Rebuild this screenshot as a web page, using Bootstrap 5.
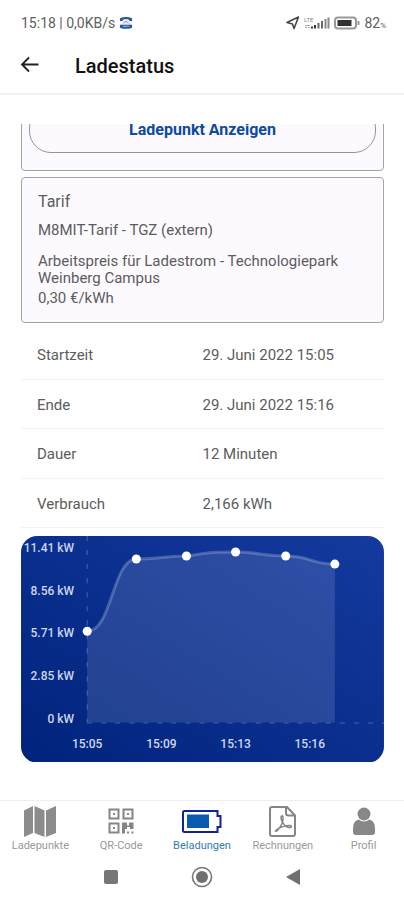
<!DOCTYPE html>
<html lang="de">
<head>
<meta charset="utf-8">
<meta name="viewport" content="width=device-width, initial-scale=1">
<title>Ladestatus</title>
<link href="https://cdn.jsdelivr.net/npm/bootstrap@5.3.0/dist/css/bootstrap.min.css" rel="stylesheet">
<style>
  body { font-family: Roboto, "Liberation Sans", sans-serif; font-size: 15px; line-height: 17px; color: #5c5c5c; background: #fff; }
  svg { display: block; }
  .statusbar { height: 46px; padding: 0 18px 0 21px; font-size: 14px; color: #606060; }
  .percent { font-size: 8px; line-height: 12px; }
  .appbar { height: 49px; border-bottom: 2px solid #f1f1f1; color: #111; }
  .appbar h1 { font-size: 20px; line-height: 24px; font-weight: 500; }
  .content { margin: 29px 20px 0 21px; }
  .scroll-edge { height: 47px; }
  .panel { border: 1px solid #a3a2a4; border-radius: 4px; background: #fcfafe; }
  .locate { padding: 17px 7px; }
  .show-btn { height: 47px; border: 1px solid #959496; border-radius: 22px; color: #0d4b9b; font-size: 16px; font-weight: 700; }
  .tariff { margin-top: 6px; padding: 14px 14px 15px 16px; }
  .tariff h2 { font-size: 16px; line-height: 20px; font-weight: 400; margin-bottom: 10px; color: #5c5c5c; }
  .tariff p { margin-bottom: 14px; }
  .tariff .terms { margin-bottom: 3px; }
  .facts { margin-top: 6px; }
  .facts th, .facts td { height: 50px; padding: 3px 0 0; font-weight: 400; vertical-align: middle; border-bottom: 1px solid #f3f3f3; }
  .facts th { padding-left: 16px; }
  .facts tr:nth-child(even) > * { height: 49px; }
  .chart { margin-top: 8px; }
  .chart text { font-size: 12px; font-weight: 500; fill: #ccd6ef; }
  .tabs { border-top: 1px solid #eee; font-size: 11px; line-height: 14px; }
  .tabs a { color: #999; text-decoration: none; }
  .tabs a.active { color: #2f7db2; }
  .sysnav { height: 47px; padding: 0 65px; }
</style>
</head>
<body class="d-flex flex-column min-vh-100">
<div class="statusbar d-flex align-items-center justify-content-between">
  <div class="d-flex align-items-center">
    <span>15:18 | 0,0KB/s</span>
    <svg class="ms-1" width="14" height="14" viewBox="0 0 15 14" aria-hidden="true"><path d="M1 5V2Q7.500-1 14 2v3l-3-.5-1-1.500H5L4 4.500z" fill="#2458a7"/><path d="M4.500 4h6l2.500 5H2z" fill="#e8e5f4"/><path d="m5 7 2.500-2L10 7" stroke="#d77b8b" fill="none"/><path d="M1 9h13v3q-6.500 2.500-13 0z" fill="#2458a7"/><path d="M4 10.500h7" stroke="#a9bce0"/></svg>
  </div>
  <div class="d-flex align-items-center gap-1">
    <svg width="14" height="14" viewBox="0 0 14 14" aria-hidden="true"><path d="M1 6.500 12.500 1 8 12.500 6.500 8z" fill="none" stroke="#444" stroke-width="1.600" stroke-linejoin="round"/></svg>
    <svg width="26" height="14" viewBox="0 0 26 14" aria-hidden="true"><text x="0" y="6" font-size="6" fill="#888">LTE</text><path d="M1 9.500h5M1 11.500h2m1 0h2" stroke="#aaa"/><path d="M8 10.500v2M11 9v3.500" stroke="#333" stroke-width="2"/><path d="M14.500 7v5.500M18 5v7.500" stroke="#666" stroke-width="2"/><path d="M21.500 3v9.500M24.500 1.500v11" stroke="#888" stroke-width="2"/></svg>
    <svg width="26" height="14" viewBox="0 0 26 14" aria-hidden="true"><rect x="1" y="1.500" width="21" height="11" rx="3" fill="none" stroke="#999" stroke-width="2"/><rect x="3.500" y="4" width="14" height="6" fill="#333"/><path d="M24.500 5v4" stroke="#999" stroke-width="2"/></svg>
    <span class="d-flex align-items-end">82<span class="percent">%</span></span>
  </div>
</div>
<header class="appbar d-flex align-items-center pb-2">
  <button type="button" class="btn border-0 p-0 ms-3" aria-label="Zurück"><svg width="27" height="24" viewBox="0 0 27 24" fill="none" stroke="#222" stroke-width="1.800"><path d="M22.500 10.500H6.500M13 3.500 6 10.500l7 7"/></svg></button>
  <h1 class="mb-0 ms-4 ps-2">Ladestatus</h1>
</header>
<main class="content">
  <div class="scroll-edge overflow-hidden d-flex flex-column justify-content-end">
    <div class="panel locate"><button type="button" class="show-btn btn w-100 p-0">Ladepunkt Anzeigen</button></div>
  </div>
  <section class="panel tariff">
    <h2>Tarif</h2>
    <p>M8MIT-Tarif - TGZ (extern)</p>
    <p class="terms">Arbeitspreis für Ladestrom - Technologiepark Weinberg Campus</p>
    <p class="mb-0">0,30 €/kWh</p>
  </section>
  <table class="facts w-100">
    <colgroup><col class="w-50"><col class="w-50"></colgroup>
    <tbody>
    <tr><th scope="row">Startzeit</th><td>29. Juni 2022 15:05</td></tr>
    <tr><th scope="row">Ende</th><td>29. Juni 2022 15:16</td></tr>
    <tr><th scope="row">Dauer</th><td>12 Minuten</td></tr>
    <tr><th scope="row">Verbrauch</th><td>2,166 kWh</td></tr>
    </tbody>
  </table>
  <svg class="chart w-100" viewBox="0 0 362 226" role="img" aria-label="Ladeleistung in kW">
    <defs>
      <linearGradient id="bg" x1="0" y1="1" x2="1" y2="0"><stop stop-color="#00237c"/><stop offset="1" stop-color="#143a9f"/></linearGradient>
      <clipPath id="round"><rect width="362" height="226" rx="16"/></clipPath>
    </defs>
    <g clip-path="url(#round)">
      <rect width="362" height="226" fill="url(#bg)"/>
      <path d="M66 0V186M66 186.500H362" fill="none" stroke="#fff" stroke-opacity=".25" stroke-dasharray="5 9"/>
      <path d="M66 95C91 95 91 23 115 23C140 23 140 20 165 20C190 16 190 16 214 16C239 16 239 20 264 20C289 20 289 28 313 28V186H66Z" fill="#fff" fill-opacity=".12"/>
      <path d="M66 95C91 95 91 23 115 23C140 23 140 20 165 20C190 16 190 16 214 16C239 16 239 20 264 20C289 20 289 28 313 28" fill="none" stroke="#fff" stroke-opacity=".22" stroke-width="3"/>
      <g fill="#fff"><circle cx="66" cy="95" r="4.500"/><circle cx="115" cy="23" r="4.500"/><circle cx="165" cy="20" r="4.500"/><circle cx="214" cy="16" r="4.500"/><circle cx="264" cy="20" r="4.500"/><circle cx="313" cy="28" r="4.500"/></g>
      <g text-anchor="end"><text x="53" y="16">11.41 kW</text><text x="53" y="59">8.56 kW</text><text x="53" y="101">5.71 kW</text><text x="53" y="144">2.85 kW</text><text x="53" y="186">0 kW</text></g>
      <g text-anchor="middle"><text x="66" y="211">15:05</text><text x="140" y="211">15:09</text><text x="214" y="211">15:13</text><text x="288" y="211">15:16</text></g>
    </g>
  </svg>
</main>
<footer class="mt-auto">
  <nav class="tabs row row-cols-5 g-0 text-center">
    <a href="#" class="col d-flex flex-column align-items-center pt-1"><svg width="34" height="34" viewBox="0 0 34 34" fill="#8c8c8c"><path d="M1 5.500 10 1v27L1 32z"/><path d="m11.500 1 10 4.500V32l-10-4z"/><path d="M23 5.500 33 1v27l-10 4z"/></svg><span>Ladepunkte</span></a>
    <a href="#" class="col d-flex flex-column align-items-center pt-1"><svg width="34" height="34" viewBox="0 0 34 34"><g fill="none" stroke="#858585" stroke-width="2"><path d="M5.500 4.500h9v9h-9zM19.500 4.500h9v9h-9zM5.500 18.500h9v9h-9z"/></g><path d="M9 8h2v2H9zM23 8h2v2h-2zM9 22h2v2H9zM18 17.500h5v3h2v-3h4.500V24H26v-2h-3v2h-2v4.500h-3zM23 26.500h2v2h-2zM27.500 26.500h2v2h-2z" fill="#858585"/></svg><span>QR-Code</span></a>
    <a href="#" class="col d-flex flex-column align-items-center pt-1 active" aria-current="page"><svg width="42" height="34" viewBox="0 0 42 34"><path d="M3.500 6h33v5h3v11h-3v5h-33q-1.500 0-1.500-1.500v-18Q2 6 3.500 6z" fill="none" stroke="#10239b" stroke-width="2"/><path d="M6 9.500h22v13.500H6z" fill="#0b5cb0"/></svg><span>Beladungen</span></a>
    <a href="#" class="col d-flex flex-column align-items-center pt-1"><svg width="34" height="34" viewBox="0 0 34 34" fill="none" stroke="#858585" stroke-width="2"><path d="M6 2h15l8 8.500V29q0 2-2 2H6q-2 0-2-2V4q0-2 2-2z"/><path d="M20 2v6q0 2.500 2.500 2.500H29"/><path d="M15.500 10.500c2 0 2 4 .5 8-1.500 3-4 7.500-6.500 8M15.500 11c-1.500 2 1 7.500 4 10 2 2 6 2 6 .5 0-2-11.500-1-16.500 5" stroke-width="1.500"/></svg><span>Rechnungen</span></a>
    <a href="#" class="col d-flex flex-column align-items-center pt-1"><svg width="34" height="34" viewBox="0 0 34 34" fill="#888"><circle cx="17" cy="9" r="6.500"/><path d="M11.500 14.500q5.500 4 11 0 5.500 1.500 5.500 9V27q0 3-3 3H9q-3 0-3-3v-3.500q0-7.500 5.500-9z"/></svg><span>Profil</span></a>
  </nav>
  <div class="sysnav row row-cols-3 g-0 align-items-center">
    <button type="button" class="col btn border-0 p-0 d-flex justify-content-center" aria-label="Letzte Apps"><svg width="16" height="16"><rect x="1" y="1" width="14" height="14" rx="2" fill="#777"/></svg></button>
    <button type="button" class="col btn border-0 p-0 d-flex justify-content-center" aria-label="Startseite"><svg width="22" height="22"><circle cx="11" cy="11" r="9.500" fill="none" stroke="#777" stroke-width="1.600"/><circle cx="11" cy="11" r="6" fill="#707070"/></svg></button>
    <button type="button" class="col btn border-0 p-0 d-flex justify-content-center" aria-label="Zurück"><svg width="16" height="18"><path d="M15 1v16L1 9z" fill="#707070"/></svg></button>
  </div>
</footer>
<script src="https://cdn.jsdelivr.net/npm/bootstrap@5.3.0/dist/js/bootstrap.bundle.min.js"></script>
</body>
</html>
